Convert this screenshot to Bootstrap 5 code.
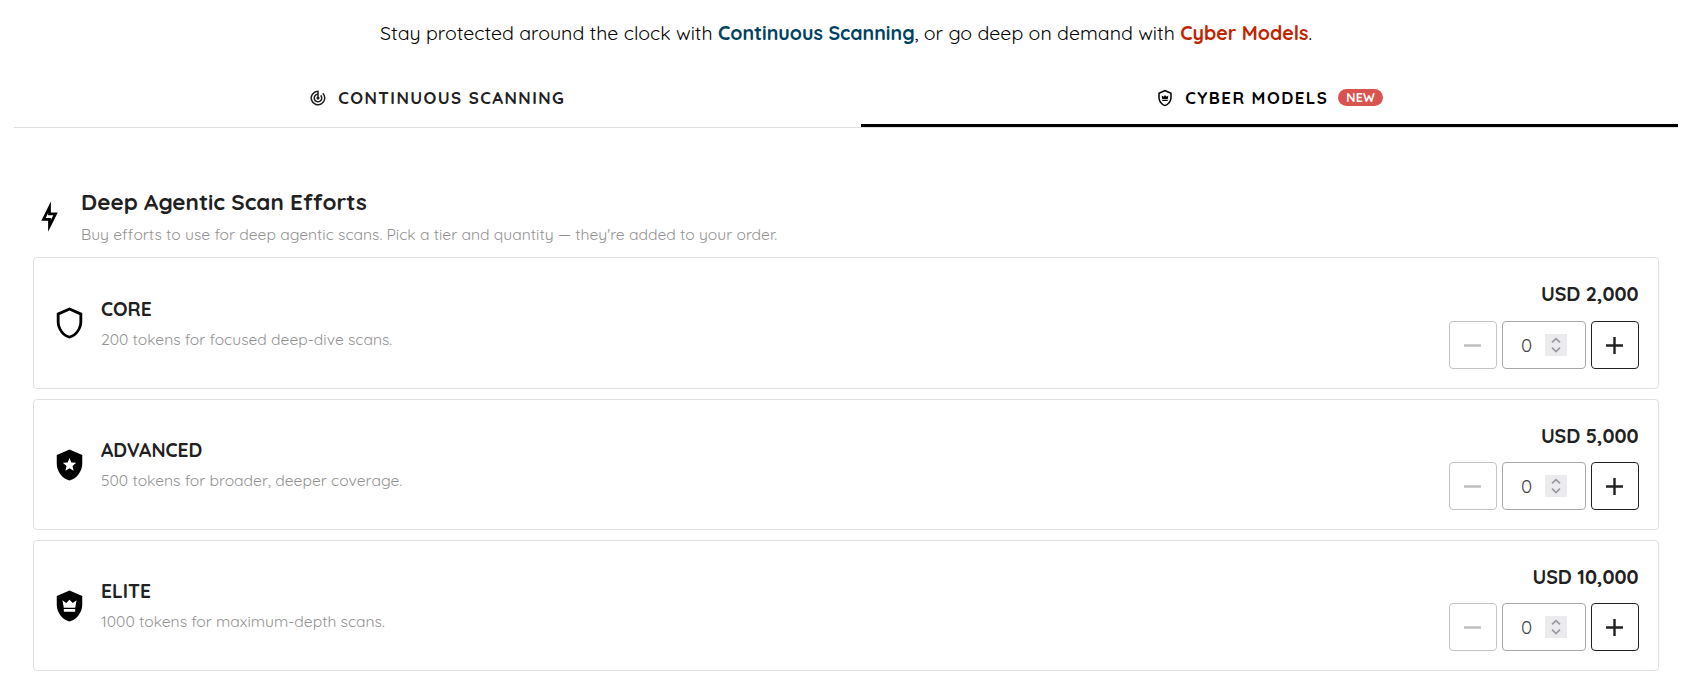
<!DOCTYPE html>
<html lang="en">
<head>
<meta charset="utf-8">
<meta name="viewport" content="width=device-width, initial-scale=1">
<title>Cyber Models</title>
<link href="https://cdn.jsdelivr.net/npm/bootstrap@5.3.0/dist/css/bootstrap.min.css" rel="stylesheet">
<style>
body{font-family:Quicksand,Lato,sans-serif;color:#212121;background:#fff;overflow:hidden}
.intro{padding:19px 3px 0 0;font-size:19.57px;line-height:28px;color:#000;height:68px}
.intro .scan{color:#00435f}
.intro .models{color:#bf2600}
.tabs{margin:0 17px 0 14px;height:60px;border-bottom:1px solid #e0e0e0}
.tabs .nav-link{border:0;border-bottom:3px solid transparent;border-radius:0;height:59px;padding:3px 0 0;color:#212121;font-size:16.9px;font-weight:700;letter-spacing:1.43px;line-height:24px}
.tabs .nav-link svg{width:18px;height:18px;margin:0 11px 0 -.5px}
.tabs .first{width:847px}
.tabs .second{width:817px}
.tabs .nav-link.active{border-bottom-color:#000;color:#000}
.pill-new{background:#d9534f;color:#fff;font-size:12.5px;font-weight:700;line-height:17px;letter-spacing:.2px;border-radius:9px;margin:0 -1px 0 10px;width:45px;text-align:center}
.panel{margin:0 36px 0 33px;padding-top:58px}
.head{height:71px}
.head h2{font-size:22.45px;line-height:30px;font-weight:700;margin:.5px 0 5.5px}
.muted{font-size:15.66px;line-height:24px;color:#929292}
.head svg{width:33px;height:33px;margin:14px 15px 0 0}
.tier{height:131px;border:1px solid #e0e0e0;border-radius:4px;padding:0 19px;margin-bottom:10px}
.tier.tall{height:132px}
.tier .shield{width:35px;height:34px;margin:0 14px 0 -1px}
.tier .info{padding-bottom:1px}
.tier h3{font-size:19.2px;line-height:28px;font-weight:700;margin:0 0 4px}
.price{font-size:19.6px;line-height:32px;font-weight:700;margin-bottom:10px;padding-right:.5px;text-align:right}
.tall .price{margin-bottom:11px}
.buy{margin-bottom:19px}
.controls{gap:5px}
.step{width:48px;height:48px;border:1px solid #212121;border-radius:4px;background:#fff;color:#212121;padding:0 1px 0 0}
.step:disabled{border-color:#c4c4c4;color:#bdbdbd}
.qty{width:84px;height:48px;border:1px solid #a8a8a8;border-radius:4px;font-size:18.8px;color:#444;padding:0 18px}
.qty span{padding-top:1px}
.spin{width:22px;height:22px;background:#ebebed}
</style>
</head>
<body>
<svg class="d-none" xmlns="http://www.w3.org/2000/svg">
<symbol id="minus" viewBox="0 0 24 24"><path fill="currentColor" d="M19 13H5v-2h14z"/></symbol>
<symbol id="plus" viewBox="0 0 24 24"><path fill="currentColor" d="M19 13h-6v6h-2v-6H5v-2h6V5h2v6h6z"/></symbol>
<symbol id="updown" viewBox="0 0 22 22"><path d="M7 8.400 11 4.600l4 3.800M7 13.700l4 3.800 4-3.800" fill="none" stroke="#9a99a3" stroke-width="1.700"/></symbol>
</svg>
<p class="intro text-center mb-0">Stay protected around the clock with <b class="scan">Continuous Scanning</b>, or go deep on demand with <b class="models">Cyber Models</b>.</p>
<nav class="nav nav-tabs tabs">
<a class="nav-link first d-flex align-items-center justify-content-center"><svg viewBox="0 0 24 24"><path fill="currentColor" d="m19.070 4.930-1.410 1.410A8 8 0 1 1 11 4.070v2.020A6 6 0 1 0 16.240 7.760l-1.410 1.410A4 4 0 1 1 11 8.140v2.140a2 2 0 1 0 2 0V2h-1a10 10 0 1 0 7.070 2.930"/></svg><span>CONTINUOUS SCANNING</span></a>
<a class="nav-link second active d-flex align-items-center justify-content-center"><svg viewBox="0 0 24 24"><path fill="currentColor" d="M21 11c0 5.550-3.840 10.740-9 12-5.160-1.260-9-6.450-9-12V5l9-4 9 4zm-9 10c3.750-1 7-5.460 7-9.780V6.300l-7-3.120L5 6.300v4.920C5 15.540 8.250 20 12 21m3.600-7.500H8.400L7.500 8.500l2.700 1.800L12 8l1.800 2.300 2.700-1.800zm0 1V16H8.400v-1.500z"/></svg><span>CYBER MODELS</span><span class="pill-new">NEW</span></a>
</nav>
<main class="panel">
<div class="head d-flex align-items-start"><svg viewBox="0 0 24 24"><path fill="#000" d="M11 9.470V11h3.760L13 14.530V13H9.240zM13 1 6 15h5v8l7-14h-5z"/></svg>
<div><h2>Deep Agentic Scan Efforts</h2>
<p class="muted mb-0">Buy efforts to use for deep agentic scans. Pick a tier and quantity — they're added to your order.</p></div></div>

<section class="tier tall d-flex justify-content-between">
<div class="d-flex align-items-center"><svg class="shield" viewBox="0 0 24 24"><path d="M21 11c0 5.550-3.840 10.740-9 12-5.160-1.260-9-6.450-9-12V5l9-4 9 4zm-9 10c3.750-1 7-5.460 7-9.780V6.300l-7-3.120L5 6.300v4.920C5 15.540 8.250 20 12 21"/></svg><div class="info"><h3>CORE</h3><div class="muted">200 tokens for focused deep-dive scans.</div></div></div>
<div class="buy align-self-end"><div class="price">USD 2,000</div><div class="d-flex controls"><button class="step" disabled><svg width="29" height="29"><use href="#minus"/></svg></button><div class="qty d-flex align-items-center justify-content-between"><span>0</span><svg class="spin"><use href="#updown"/></svg></div><button class="step"><svg width="29" height="29"><use href="#plus"/></svg></button></div></div>
</section>

<section class="tier d-flex justify-content-between">
<div class="d-flex align-items-center"><svg class="shield" viewBox="0 0 24 24"><path fill-rule="evenodd" d="M21 11c0 5.550-3.840 10.740-9 12-5.160-1.260-9-6.450-9-12V5l9-4 9 4zm-6.100 5-.770-3.320 2.580-2.230-3.400-.290L12 7l-1.310 3.150-3.400.290 2.570 2.240L9.100 16l2.900-1.750z"/></svg><div class="info"><h3>ADVANCED</h3><div class="muted">500 tokens for broader, deeper coverage.</div></div></div>
<div class="buy align-self-end"><div class="price">USD 5,000</div><div class="d-flex controls"><button class="step" disabled><svg width="29" height="29"><use href="#minus"/></svg></button><div class="qty d-flex align-items-center justify-content-between"><span>0</span><svg class="spin"><use href="#updown"/></svg></div><button class="step"><svg width="29" height="29"><use href="#plus"/></svg></button></div></div>
</section>

<section class="tier d-flex justify-content-between">
<div class="d-flex align-items-center"><svg class="shield" viewBox="0 0 24 24"><path fill-rule="evenodd" d="M21 11c0 5.550-3.840 10.740-9 12-5.160-1.260-9-6.450-9-12V5l9-4 9 4zm-5 2.300 1-5.300-2.700 1.900L12 7.600 9.700 9.900 7 8l1 5.300zM8 14.200V16h8v-1.800z"/></svg><div class="info"><h3>ELITE</h3><div class="muted">1000 tokens for maximum-depth scans.</div></div></div>
<div class="buy align-self-end"><div class="price">USD 10,000</div><div class="d-flex controls"><button class="step" disabled><svg width="29" height="29"><use href="#minus"/></svg></button><div class="qty d-flex align-items-center justify-content-between"><span>0</span><svg class="spin"><use href="#updown"/></svg></div><button class="step"><svg width="29" height="29"><use href="#plus"/></svg></button></div></div>
</section>
</main>
<script src="https://cdn.jsdelivr.net/npm/bootstrap@5.3.0/dist/js/bootstrap.bundle.min.js"></script>
</body>
</html>
